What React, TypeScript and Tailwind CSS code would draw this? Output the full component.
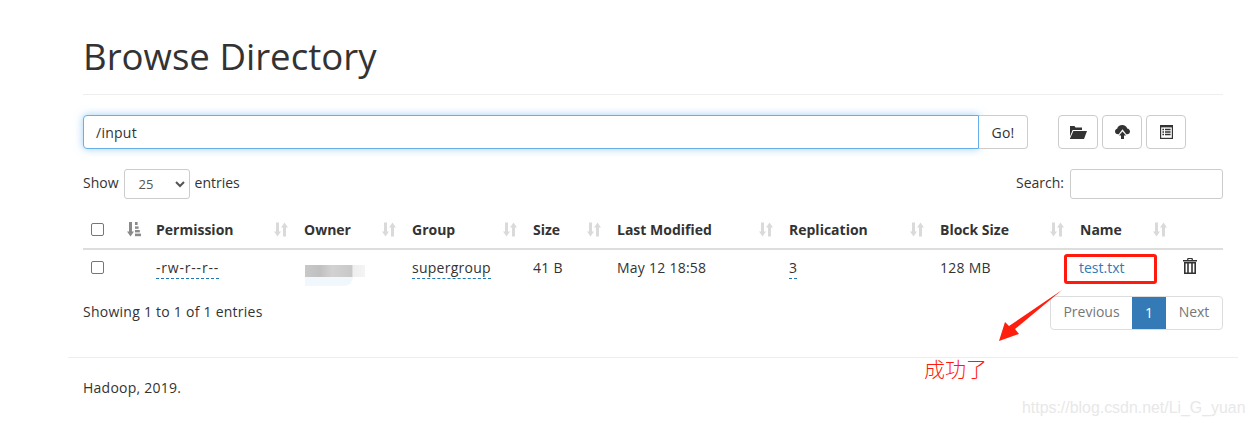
import React from 'react';

const font = "font-['Open_Sans','Noto_Sans',sans-serif]";

const SortIcon = ({ active }: { active?: boolean }) => (
  <svg width="14" height="15" viewBox="0 0 14 15" className={active ? 'text-[#8a8a8a]' : 'text-[#dadada]'} fill="currentColor">
    {active ? (
      <>
        <path d="M2 0h3v9.5h2L3.5 14.6 0 9.5h2z" />
        <rect x="8" y="0" width="2.6" height="3" />
        <rect x="8" y="4.4" width="3.6" height="2.4" />
        <rect x="8" y="8" width="4.8" height="2.4" />
        <rect x="8" y="11.6" width="6" height="2.6" />
      </>
    ) : (
      <>
        <path d="M2 .4h3v9.2h2l-3.5 5L0 9.6h2z" />
        <path d="M9 14.6h3V5.4h2L10.5.4 7 5.4h2z" />
      </>
    )}
  </svg>
);

const Th = ({ label, sort = true }: { label?: string; sort?: boolean }) => (
  <th className="border-b-2 border-[#dddddd] px-2 pt-[10px] pb-[9px] text-left text-[14px] font-bold tracking-normal text-[#333333]">
    <div className="flex h-[20px] items-center justify-between">
      <span>{label}</span>
      {sort && <SortIcon />}
    </div>
  </th>
);

const Abbr = ({ children, wide }: { children: React.ReactNode; wide?: boolean }) => (
  <span className={`border-b border-dashed border-[#1f78b4] pb-[1px] ${wide ? 'tracking-[0.8px]' : ''}`}>{children}</span>
);

const IconButton = ({ children }: { children: React.ReactNode }) => (
  <button className="flex h-[34px] w-[40px] items-center justify-center rounded border border-[#cccccc] bg-white text-[#333333]">
    {children}
  </button>
);

const Checkbox = () => <input type="checkbox" className="m-0 block h-[13px] w-[13px] appearance-none rounded-[2px] border border-[#767676] bg-white" />;

export default function App() {
  return (
    <div className={`relative h-[425px] w-[1253px] overflow-hidden bg-white text-[14px] tracking-[0.25px] text-[#333333] ${font}`}>
      <div className="ml-[68px] w-[1170px]">
        <div className="mx-[15px] h-[95px] border-b border-[#eeeeee] pt-[36px]">
          <h1 className="text-[36.6px] leading-[40px] font-normal tracking-normal text-[#333333]">Browse Directory</h1>
        </div>

        {/* Path bar */}
        <div className="mx-[15px] mt-[20px] flex">
          <div className="flex h-[34px] w-[896px] items-center rounded-l border border-[#66afe9] bg-white px-3 shadow-[0_0_8px_rgba(102,175,233,0.6)]">
            /input
          </div>
          <button className="h-[34px] w-[49px] rounded-r border border-l-0 border-[#cccccc] bg-white text-[#333333]">Go!</button>
          <div className="ml-[30px] flex gap-1">
            <IconButton>
              <svg width="18" height="14" viewBox="0 0 18 14" fill="currentColor">
                <path d="M1 1h4.5l1 1.5H13V5H3.6L1 11.5z" />
                <path d="M4.4 6H18l-3 8H0.8z" />
              </svg>
            </IconButton>
            <IconButton>
              <svg width="15" height="14" viewBox="0 0 15 14" fill="currentColor">
                <path d="M3 9.2C1.2 9.2 0 8 0 6.4c0-1.3.9-2.3 2.1-2.6C2.6 1.6 4.7 0 7.3 0c2.4 0 4.3 1.4 4.9 3.5 1.6.2 2.8 1.4 2.8 3 0 1.6-1.2 2.7-2.9 2.7h-.8L7.5 4.3 3.7 9.2z" />
                <path d="M7.5 6.4 11 10.4H9V14H6v-3.6H4z" />
              </svg>
            </IconButton>
            <IconButton>
              <svg width="13" height="14" viewBox="0 0 13 14">
                <rect x="0" y="0" width="13" height="14" fill="currentColor" />
                <rect x="1.2" y="2.4" width="10.6" height="10.4" fill="#ffffff" />
                <path d="M2.4 3.8h1.6v1.5H2.4zM5 3.8h5.6v1.5H5zM2.4 6.3h1.6v1.5H2.4zM5 6.3h5.6v1.5H5zM2.4 8.8h1.6v1.5H2.4zM5 8.8h5.6v1.5H5z" fill="currentColor" />
              </svg>
            </IconButton>
          </div>
        </div>

        {/* Length and search */}
        <div className="mx-[15px] mt-[20px] flex h-[30px] items-center justify-between tracking-normal">
          <div className="flex items-center">
            <span className="-mt-[3px]">Show</span>
            <div className="relative mx-[5px] flex h-[30px] w-[66px] items-center rounded-[3px] border border-[#cccccc] bg-white pl-[14px] pt-[1px] text-[13px] text-[#555555]">
              25
              <svg width="10" height="7" viewBox="0 0 10 7" fill="none" stroke="#555555" strokeWidth="2" className="absolute right-[4px] top-[11px]">
                <path d="M1 1l4 4 4-4" />
              </svg>
            </div>
            <span className="-mt-[3px]">entries</span>
          </div>
          <div className="flex items-center gap-[6px]">
            <span className="-mt-[3px]">Search:</span>
            <div className="h-[30px] w-[153px] rounded-[3px] border border-[#cccccc] bg-white" />
          </div>
        </div>

        {/* Listing */}
        <table className="mx-[15px] mt-[10px] w-[1140px] table-fixed border-collapse">
          <colgroup>
            <col className="w-[36px]" />
            <col className="w-[29px]" />
            <col className="w-[148px]" />
            <col className="w-[108px]" />
            <col className="w-[121px]" />
            <col className="w-[84px]" />
            <col className="w-[172px]" />
            <col className="w-[151px]" />
            <col className="w-[140px]" />
            <col className="w-[103px]" />
            <col className="w-[48px]" />
          </colgroup>
          <thead>
            <tr>
              <th className="border-b-2 border-[#dddddd] pl-2 pt-[10px] pb-[9px]"><Checkbox /></th>
              <th className="border-b-2 border-[#dddddd] pl-[8px] pt-[10px] pb-[9px]"><SortIcon active /></th>
              <Th label="Permission" />
              <Th label="Owner" />
              <Th label="Group" />
              <Th label="Size" />
              <Th label="Last Modified" />
              <Th label="Replication" />
              <Th label="Block Size" />
              <Th label="Name" />
              <th className="border-b-2 border-[#dddddd]" />
            </tr>
          </thead>
          <tbody>
            <tr className="h-[37px] border-b border-white">
              <td className="pl-2"><Checkbox /></td>
              <td />
              <td className="px-2"><Abbr wide>-rw-r--r--</Abbr></td>
              <td className="px-2" />
              <td className="px-2"><Abbr>supergroup</Abbr></td>
              <td className="px-2">41 B</td>
              <td className="px-2">May 12 18:58</td>
              <td className="px-2"><Abbr>3</Abbr></td>
              <td className="px-2">128 MB</td>
              <td className="pl-[7px] text-[#337ab7] tracking-normal">test.txt</td>
              <td className="pl-2 pb-[4px]">
                <svg width="14" height="16" viewBox="0 0 14 16" className="text-[#333333]" fill="currentColor">
                  <path d="M4.5 0h5l.5 2H14v1.4H0V2h4zM5.4 1v1h3.2V1z" fillRule="evenodd" />
                  <path d="M1 4h12v12H1zM2.6 5.4v9.2h1.6V5.4zm3.2 0v9.2h2.4V5.4zm4 0v9.2h1.6V5.4z" fillRule="evenodd" />
                </svg>
              </td>
            </tr>
          </tbody>
        </table>

        {/* Footer of the table */}
        <div className="mx-[15px] mt-[9px] flex items-start justify-between">
          <div className="pt-[5px]">Showing 1 to 1 of 1 entries</div>
          <div className="flex h-[34px] overflow-hidden rounded border border-[#dddddd] tracking-normal">
            <span className="flex w-[81px] -translate-y-[1px] items-center justify-center text-[#777777]">Previous</span>
            <span className="flex w-[34px] items-center justify-center bg-[#337ab7] text-white">1</span>
            <span className="flex w-[56px] -translate-y-[1px] items-center justify-center text-[#777777]">Next</span>
          </div>
        </div>

        <div className="mt-[27px] h-[1px] bg-[#eeeeee]" />
        <p className="mx-[15px] mt-[20px] leading-[20px]">Hadoop, 2019.</p>
      </div>

      {/* Screenshot annotations and markup */}
      <div className="absolute left-[305px] top-[265px] h-[12px] w-[60px] bg-[linear-gradient(90deg,#c8c8c8,#c0c0c0_25%,#d2d2d2_45%,#c8c8c8_78%,#eeeeee_80%,#f4f4f4)]" />
      <div className="absolute left-[305px] top-[277px] h-[9px] w-[48px] rounded-br-2xl bg-[#f1f8fb]" />
      <div className="absolute left-[1064px] top-[254px] h-[30px] w-[93px] rounded-[3px] border-[3px] border-[#ff1a0d]" />
      <svg className="absolute left-[998px] top-[288px]" width="66" height="54" viewBox="0 0 66 54">
        <path d="M64 2 17 41l4 5L1 53l6-19 4 4z" fill="#ff1f0f" />
      </svg>
      <div className="absolute left-[924px] top-[355px] font-['Noto_Sans_CJK_SC','Noto_Sans',sans-serif] text-[21px] leading-[26px] font-light tracking-normal text-[#ff1a0d]">成功了</div>
      <div className="absolute left-[1022px] top-[398px] font-['Liberation_Sans',sans-serif] text-[15.9px] leading-[20px] tracking-normal text-[#e8e8e8]">https://blog.csdn.net/Li_G_yuan</div>
    </div>
  );
}
